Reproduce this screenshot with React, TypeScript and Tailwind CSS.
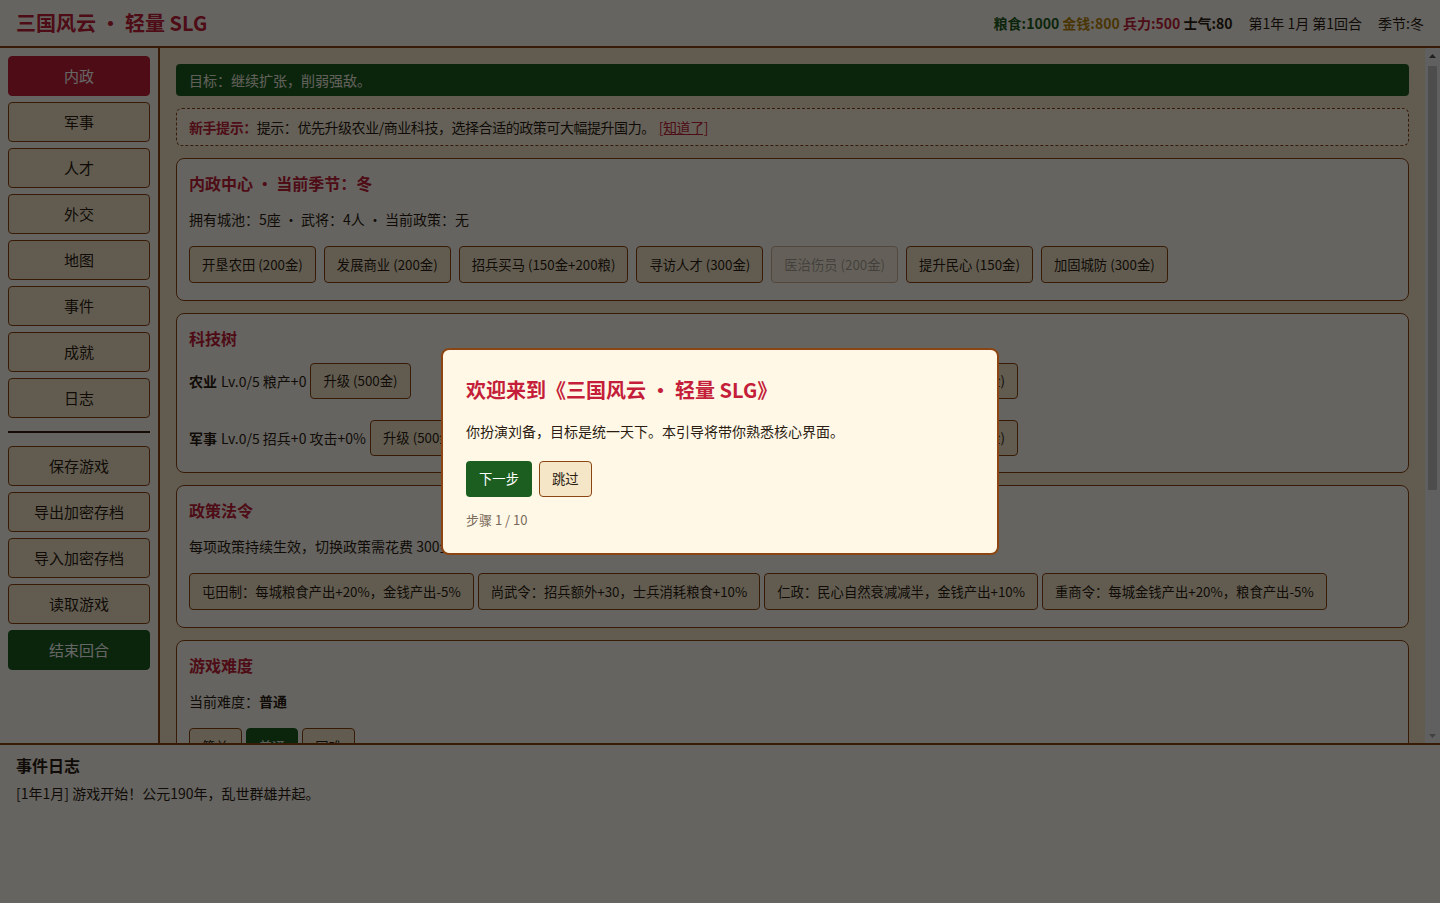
import React from "react";

const navItems = ["内政", "军事", "人才", "外交", "地图", "事件", "成就", "日志"];
const fileItems = ["保存游戏", "导出加密存档", "导入加密存档", "读取游戏"];

const domesticActions = [
    { label: "开垦农田 (200金)" },
    { label: "发展商业 (200金)" },
    { label: "招兵买马 (150金+200粮)" },
    { label: "寻访人才 (300金)" },
    { label: "医治伤员 (200金)", disabled: true },
    { label: "提升民心 (150金)" },
    { label: "加固城防 (300金)" },
];

const techs = [
    { name: "农业", desc: "Lv.0/5 粮产+0" },
    { name: "商业", desc: "Lv.0/5 金产+0" },
    { name: "军事", desc: "Lv.0/5 招兵+0 攻击+0%" },
    { name: "内政", desc: "Lv.0/5 民心+0" },
];

const policies = [
    "屯田制：每城粮食产出+20%，金钱产出-5%",
    "尚武令：招兵额外+30，士兵消耗粮食+10%",
    "仁政：民心自然衰减减半，金钱产出+10%",
    "重商令：每城金钱产出+20%，粮食产出-5%",
];

const cities = [
    { name: "平原", food: 220, gold: 160, troops: 120, loyalty: 70 },
    { name: "新野", food: 200, gold: 150, troops: 100, loyalty: 68 },
    { name: "小沛", food: 180, gold: 170, troops: 110, loyalty: 65 },
    { name: "下邳", food: 210, gold: 180, troops: 90, loyalty: 72 },
    { name: "汝南", food: 190, gold: 140, troops: 80, loyalty: 60 },
];

const btn =
    "rounded border border-[#8b4513] bg-[#f5e6c8] px-3 text-[13.33px] text-[#2b1d12] whitespace-nowrap";

function Card({ title, children }: { title: string; children: React.ReactNode }) {
    return (
        <section className="rounded-lg border border-[#8b4513] bg-[#fffaf0] px-3 pt-3 pb-[13px]">
            <h3 className="text-base font-bold leading-6 text-[#c41e3a]">{title}</h3>
            {children}
        </section>
    );
}

// classic scrollbar look for the main panel
function ScrollRail() {
    return (
        <div className="flex w-[15px] shrink-0 flex-col bg-[#f1f1f1]">
            <div className="flex h-[15px] items-center justify-center">
                <svg width="7" height="4" viewBox="0 0 7 4">
                    <path d="M3.5 0L7 4H0z" fill="#505050" />
                </svg>
            </div>
            <div className="flex-1 px-[3px] pt-[3px]">
                <div className="h-[424px] rounded-[1px] bg-[#c1c1c1]" />
            </div>
            <div className="flex h-[15px] items-center justify-center">
                <svg width="7" height="4" viewBox="0 0 7 4">
                    <path d="M0 0H7L3.5 4z" fill="#a3a3a3" />
                </svg>
            </div>
        </div>
    );
}

export default function App() {
    return (
        <div className="flex h-screen flex-col overflow-hidden bg-[#f5e6c8] font-['Noto_Sans_CJK_SC','Noto_Sans',sans-serif] text-[#2b1d12]">
            {/* header */}
            <header className="flex h-12 shrink-0 items-center justify-between border-b-2 border-[#8b4513] bg-[#fffaf0] px-4">
                <h1 className="text-xl font-bold text-[#c41e3a]">三国风云 · 轻量 SLG</h1>
                <div className="flex items-center gap-4 text-sm">
                    <span className="font-bold">
                        <span className="text-[#1b5e20]">粮食:1000</span>{" "}
                        <span className="text-[#b8860b]">金钱:800</span>{" "}
                        <span className="text-[#c41e3a]">兵力:500</span>{" "}
                        <span>士气:80</span>
                    </span>
                    <span>第1年 1月 第1回合</span>
                    <span>季节:冬</span>
                </div>
            </header>

            <div className="flex min-h-0 flex-1">
                {/* sidebar */}
                <nav className="flex w-40 shrink-0 flex-col gap-1.5 border-r-2 border-[#8b4513] bg-[#fffaf0] p-2">
                    {navItems.map((n, i) => (
                        <button
                            key={n}
                            className={
                                i === 0
                                    ? "h-10 rounded border border-[#c41e3a] bg-[#c41e3a] text-[15px] text-white"
                                    : "h-10 rounded border border-[#8b4513] bg-[#f5e6c8] text-[15px] text-[#2b1d12]"
                            }
                        >
                            {n}
                        </button>
                    ))}
                    <div className="my-[7px] h-0.5 bg-[#3a1f0a]" />
                    {fileItems.map((n) => (
                        <button
                            key={n}
                            className="h-10 rounded border border-[#8b4513] bg-[#f5e6c8] text-[15px] text-[#2b1d12]"
                        >
                            {n}
                        </button>
                    ))}
                    <button className="h-10 rounded border border-[#1b5e20] bg-[#1b5e20] text-[15px] text-white">
                        结束回合
                    </button>
                </nav>

                {/* main */}
                <main className="min-w-0 flex-1 space-y-3 overflow-hidden p-4">
                    <div className="flex h-8 items-center rounded bg-[#1b5e20] px-[13px] text-sm text-[#f5f0e0]">
                        目标：继续扩张，削弱强敌。
                    </div>

                    <div className="flex h-[38px] items-center rounded-md border border-dashed border-[#8b4513] bg-[#fdf3dc] px-3 text-sm tracking-[-0.45px]">
                        <b className="text-[#c41e3a]">新手提示：</b>
                        提示：优先升级农业/商业科技，选择合适的政策可大幅提升国力。
                        <span className="ml-1 text-[#c41e3a] underline">[知道了]</span>
                    </div>

                    <Card title="内政中心 · 当前季节：冬">
                        <p className="mt-[13px] text-sm leading-[22px]">拥有城池：5座 · 武将：4人 · 当前政策：无</p>
                        <div className="mt-3 flex flex-wrap gap-x-2 py-1">
                            {domesticActions.map((a) => (
                                <button
                                    key={a.label}
                                    className={btn + " h-[37px]" + (a.disabled ? " opacity-40" : "")}
                                >
                                    {a.label}
                                </button>
                            ))}
                        </div>
                    </Card>

                    <Card title="科技树">
                        <div className="mt-[13px] grid grid-cols-2 gap-x-2 gap-y-[21px] pb-[3px]">
                            {techs.map((t) => (
                                <div key={t.name} className="flex items-center gap-1 text-sm">
                                    <b>{t.name}</b>
                                    <span>{t.desc}</span>
                                    <button className={btn + " h-9"}>升级 (500金)</button>
                                </div>
                            ))}
                        </div>
                    </Card>

                    <Card title="政策法令">
                        <p className="mt-[13px] text-sm leading-[22px]">
                            每项政策持续生效，切换政策需花费 300金 与 1 回合的过渡期。
                        </p>
                        <div className="mt-3 flex flex-wrap gap-x-1 py-1">
                            {policies.map((p) => (
                                <button key={p} className={btn + " h-[37px]"}>
                                    {p}
                                </button>
                            ))}
                        </div>
                    </Card>

                    <Card title="游戏难度">
                        <p className="mt-[13px] text-sm leading-[22px]">
                            当前难度：<b>普通</b>
                        </p>
                        <div className="mt-3 flex flex-wrap gap-x-1 py-1">
                            <button className={btn + " h-[37px]"}>简单</button>
                            <button className="h-[37px] rounded border border-[#1b5e20] bg-[#1b5e20] px-3 text-[13.33px] text-white">
                                普通
                            </button>
                            <button className={btn + " h-[37px]"}>困难</button>
                        </div>
                    </Card>

                    <Card title="城池一览">
                        <table className="mt-3 w-full text-left text-sm">
                            <thead>
                                <tr className="h-9 border-b border-[#8b4513]">
                                    <th>城池</th>
                                    <th>粮产</th>
                                    <th>金产</th>
                                    <th>驻军</th>
                                    <th>民心</th>
                                </tr>
                            </thead>
                            <tbody>
                                {cities.map((c) => (
                                    <tr key={c.name} className="h-10 border-b border-[#e5d3b0]">
                                        <td>{c.name}</td>
                                        <td>{c.food}</td>
                                        <td>{c.gold}</td>
                                        <td>{c.troops}</td>
                                        <td>{c.loyalty}</td>
                                    </tr>
                                ))}
                            </tbody>
                        </table>
                    </Card>
                </main>
                <ScrollRail />
            </div>

            {/* event log */}
            <footer className="h-40 shrink-0 border-t-2 border-[#8b4513] bg-[#fffaf0] px-4 pt-[10px]">
                <h3 className="mb-2 text-base font-bold leading-5">事件日志</h3>
                <p className="text-sm leading-[21px]">[1年1月] 游戏开始！公元190年，乱世群雄并起。</p>
            </footer>

            {/* tutorial overlay */}
            <div className="fixed inset-0 flex items-center justify-center bg-black/60">
                <div className="w-[558px] rounded-lg border-2 border-[#8b4513] bg-[#fff8e7] px-6 pt-[25px] pb-[23px]">
                    <h2 className="-ml-px text-xl font-bold leading-[30px] text-[#c41e3a]">
                        欢迎来到《三国风云 · 轻量 SLG》
                    </h2>
                    <p className="mt-4 -ml-px text-sm leading-[21px] text-[#2b1d12]">
                        你扮演刘备，目标是统一天下。本引导将带你熟悉核心界面。
                    </p>
                    <div className="mt-[19px] -ml-px flex gap-[7px]">
                        <button className="h-9 rounded bg-[#1b5e20] px-[13px] text-[13.33px] text-white">下一步</button>
                        <button className="h-9 rounded border border-[#8b4513] bg-[#f5e6c8] px-3 text-[13.33px] text-[#2b1d12]">
                            跳过
                        </button>
                    </div>
                    <p className="mt-[13px] -ml-px text-[13px] leading-5 text-[#7a6a5a]">步骤 1 / 10</p>
                </div>
            </div>
        </div>
    );
}
